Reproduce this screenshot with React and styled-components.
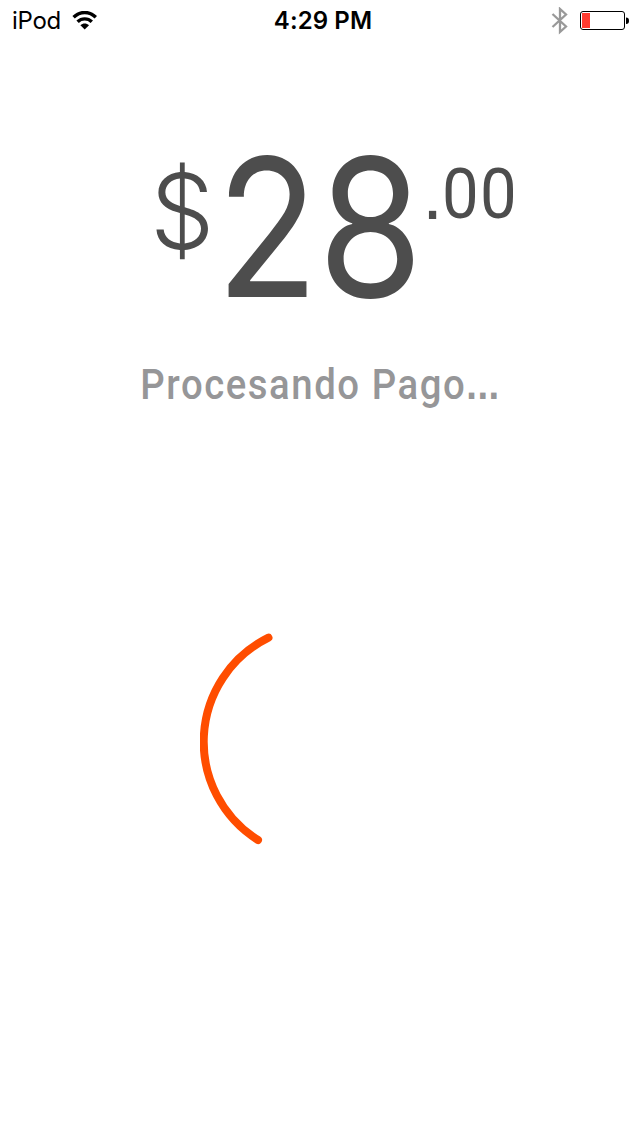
import React from 'react';
import styled, { createGlobalStyle } from 'styled-components';

const GlobalStyle = createGlobalStyle`
  * { box-sizing: border-box; }
  body { margin: 0; background: #fff; }
`;

const Screen = styled.main`
  width: 640px;
  height: 1136px;
  overflow: hidden;
  background: #fff;
  display: flex;
  flex-direction: column;
  align-items: center;
`;

const StatusBar = styled.header`
  width: 100%;
  height: 40px;
  padding: 1px 11px 0 12px;
  display: grid;
  grid-template-columns: 1fr auto 1fr;
  align-items: center;
  color: #000;
  font-family: Inter, 'Liberation Sans', sans-serif;
  font-size: 24px;
  line-height: 40px;
`;

const StatusGroup = styled.div`
  display: flex;
  align-items: center;
  justify-content: ${(p) => (p.$end ? 'flex-end' : 'flex-start')};
  gap: 11px;
`;

const Carrier = styled.span`
  letter-spacing: -0.3px;
`;

const Clock = styled.time`
  padding-left: 5px;
  font-weight: 600;
  font-size: 24px;
  letter-spacing: 0.1px;
`;

const Icon = styled.svg`
  display: block;
  flex: none;
`;

const Amount = styled.div`
  width: 640px;
  height: 210px;
  margin-top: 90px;
  padding-left: 150px;
  display: flex;
  align-items: flex-start;
  color: #4d4d4d;
  white-space: nowrap;
`;

const Glyph = styled.span`
  flex: none;
  display: block;
  width: ${(p) => p.$width}px;
  margin-top: ${(p) => p.$top || 0}px;
  font-family: ${(p) => p.$font || 'Inter'}, 'Liberation Sans', sans-serif;
  font-size: ${(p) => p.$size}px;
  font-weight: ${(p) => p.$weight || 400};
  line-height: 1;
  transform: scaleX(${(p) => p.$stretch || 1});
  transform-origin: left top;
`;

const Message = styled.p`
  margin: 20px 0 0;
  color: #969698;
  font-family: Roboto, 'Liberation Sans', sans-serif;
  font-size: 42px;
  font-weight: 500;
  line-height: 50px;
  letter-spacing: 1.7px;
  white-space: nowrap;
  transform: scaleX(0.912);
`;

const Dots = styled.span`
  font-family: 'Liberation Sans', sans-serif;
  font-weight: 700;
  letter-spacing: 0.6px;
`;

const Spinner = styled.svg`
  display: block;
  width: 240px;
  height: 240px;
  margin-top: 212px;
`;

export default function App() {
  return (
    <>
      <GlobalStyle />
      <Screen>
        <StatusBar>
          <StatusGroup>
            <Carrier>iPod</Carrier>
            <Icon width="26" height="20" viewBox="0 1 26 20">
              <g fill="none" stroke="#000" strokeWidth="3.4">
                <path d="M1.6 7.2C8 .9 17.4 .9 23.8 7.2" />
                <path d="M5.6 11.8C9.6 7.9 15.8 7.9 19.8 11.8" />
              </g>
              <path d="M8.4 15.2C11 13 14.4 13 17 15.2L12.7 19.4Z" />
            </Icon>
          </StatusGroup>
          <Clock>4:29 PM</Clock>
          <StatusGroup $end>
            <Icon width="18" height="28" viewBox="0 .5 18 28">
              <path d="M1.5 7.5L15 20L9 25.5V2.5L15 8L1.5 20.5" fill="none" stroke="#999" strokeWidth="2.3" />
            </Icon>
            <Icon width="49" height="20" viewBox="0 0 49 20">
              <rect x=".5" y=".5" width="44" height="18" rx="2.5" fill="#fff" stroke="#000" strokeWidth="1" />
              <rect x="2" y="2" width="8" height="15" fill="#ff3b30" />
              <path d="M46 6.5Q49 6.5 49 9.8T46 13Z" />
            </Icon>
          </StatusGroup>
        </StatusBar>
        <Amount>
          <Glyph $size={104} $weight={350} $width={66} $top={29} $stretch={0.98}>$</Glyph>
          <Glyph $size={193} $weight={400} $width={102} $top={1} $stretch={0.87}>2</Glyph>
          <Glyph $size={193} $weight={400} $width={104} $top={1} $stretch={0.88}>8</Glyph>
          <Glyph $size={76} $font="'Liberation Sans'" $width={20} $top={25}>.</Glyph>
          <Glyph $size={71} $font="Roboto" $width={38} $top={28} $stretch={0.92}>0</Glyph>
          <Glyph $size={71} $font="Roboto" $width={38} $top={28} $stretch={0.92}>0</Glyph>
        </Amount>
        <Message>Procesando Pago<Dots>...</Dots></Message>
        <Spinner viewBox="0 0 240 240" role="progressbar" aria-label="Procesando Pago">
          <path
            d="M68.5 15.7A116 116 0 0 0 58 218"
            fill="none"
            stroke="#ff4d00"
            strokeWidth="8"
            strokeLinecap="round"
          />
        </Spinner>
      </Screen>
    </>
  );
}
